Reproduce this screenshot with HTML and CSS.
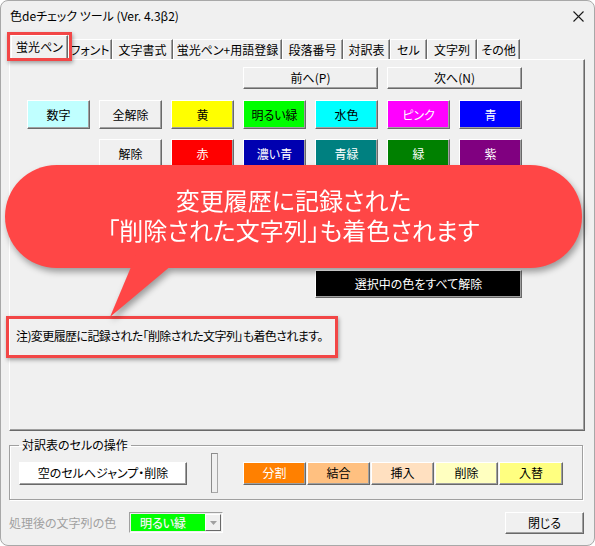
FILE: index.html
```html
<!DOCTYPE html>
<html lang="ja">
<head>
<meta charset="utf-8">
<title>色deチェック ツール</title>
<link rel="stylesheet" href="styles.css">
</head>
<body>
<div class="window">
  <div class="titlebar">
    <span class="title">色deチェック ツール (Ver. 4.3β2)</span>
    <svg class="close-x" width="11" height="11" viewBox="0 0 11 11"><path d="M0.5 0.5 L10.5 10.5 M10.5 0.5 L0.5 10.5" stroke="#1a1a1a" stroke-width="1.1" fill="none"/></svg>
  </div>
  <div class="tabs">
    <div class="tab active">蛍光ペン</div>
    <div class="tab">フォント</div>
    <div class="tab">文字書式</div>
    <div class="tab">蛍光ペン+用語登録</div>
    <div class="tab">段落番号</div>
    <div class="tab">対訳表</div>
    <div class="tab">セル</div>
    <div class="tab">文字列</div>
    <div class="tab">その他</div>
  </div>
  <div class="panel">
    <div class="grid nav">
      <button class="btn prev">前へ(P)</button>
      <button class="btn next">次へ(N)</button>
    </div>
    <div class="grid colors">
      <button class="btn c-num">数字</button>
      <button class="btn">全解除</button>
      <button class="btn c-yellow">黄</button>
      <button class="btn c-lime">明るい緑</button>
      <button class="btn c-aqua">水色</button>
      <button class="btn c-pink">ピンク</button>
      <button class="btn c-blue">青</button>
      <button class="btn col2">解除</button>
      <button class="btn c-red">赤</button>
      <button class="btn c-navy">濃い青</button>
      <button class="btn c-teal">青緑</button>
      <button class="btn c-green">緑</button>
      <button class="btn c-purple">紫</button>
    </div>
    <div class="grid clear-row">
      <button class="btn c-black clear-all">選択中の色をすべて解除</button>
    </div>
    <p class="note">注)変更履歴に記録された「削除された文字列」も着色されます。</p>
  </div>
  <fieldset class="group">
    <legend>対訳表のセルの操作</legend>
    <button class="btn jump">空のセルへジャンプ・削除</button>
    <div class="vbar"></div>
    <div class="ops">
      <button class="btn op o-split">分割</button>
      <button class="btn op o-join">結合</button>
      <button class="btn op o-insert">挿入</button>
      <button class="btn op o-delete">削除</button>
      <button class="btn op o-swap">入替</button>
    </div>
  </fieldset>
  <div class="footer">
    <span class="disabled-label">処理後の文字列の色</span>
    <div class="combo">
      <span class="combo-field">明るい緑</span>
      <span class="combo-arrow"><svg width="7" height="4" viewBox="0 0 7 4"><path d="M0 0 H7 L3.5 4 Z" fill="#a0a0a0"/></svg></span>
    </div>
    <button class="btn close-btn">閉じる</button>
  </div>

  <div class="mark tab-mark"></div>
  <div class="mark note-mark"></div>
  <div class="callout">
    <div class="bubble">
      <p class="bubble-line">変更履歴に記録された</p>
      <p class="bubble-line">「削除された文字列」も着色されます</p>
    </div>
    <svg class="tail" width="90" height="70" viewBox="0 0 90 70"><polygon points="36,4 84,4 10,66" fill="#ff4646"/></svg>
  </div>
</div>
</body>
</html>
```
FILE: styles.css
```css
* { box-sizing: border-box; }
body {
  margin: 0;
  background: #ffffff;
  font-family: "Noto Sans CJK JP", "Noto Sans", sans-serif;
  font-size: 12px;
  font-feature-settings: "palt";
  color: #000;
}
.window {
  position: relative;
  width: 595px;
  height: 546px;
  border: 1px solid #a8a8a8;
  border-radius: 8px;
  background: #f0f0f0;
  overflow: hidden;
}
.titlebar {
  height: 30px;
  display: flex;
  align-items: center;
  justify-content: space-between;
  padding: 0 10px 0 9px;
}
.title { font-size: 12px; line-height: 14px; }
.tabs {
  display: grid;
  grid-template-columns: 57px 44px 61px 109px 61px 47px 37px 50px 43px;
  height: 28px;
  align-items: end;
  padding-left: 10px;
  position: relative;
  z-index: 2;
}
.tab {
  height: 20px;
  line-height: 19px;
  text-align: center;
  border-left: 1px solid #ffffff;
  border-top: 1px solid #ffffff;
  border-right: 1px solid #696969;
  box-shadow: inset -1px 0 #a0a0a0;
  white-space: nowrap;
}
.tab.active {
  height: 25px;
  margin-bottom: -1px;
  line-height: 22px;
  background: #f0f0f0;
}
.panel {
  width: 576px;
  height: 372px;
  margin-left: 8px;
  border: 1px solid;
  border-color: #ffffff #696969 #696969 #ffffff;
  box-shadow: inset -1px -1px #a0a0a0;
  padding: 7px 0 0 6px;
}
.grid {
  display: grid;
  grid-template-columns: repeat(7, 63px);
  column-gap: 9px;
  margin-left: 11px;
}
.nav { grid-template-rows: 22px; }
.prev { grid-column: 4 / 6; }
.next { grid-column: 6 / 8; }
.colors {
  margin-top: 11px;
  grid-template-rows: 29px 29px;
  row-gap: 10px;
}
.col2 { grid-column-start: 2; }
.clear-row { margin-top: 102px; grid-template-rows: 28px; }
.clear-all { grid-column: 5 / 8; }
.btn {
  font-family: inherit;
  font-size: 12px;
  font-feature-settings: "palt";
  color: #000;
  background: #f0f0f0;
  border: 1px solid;
  border-color: #ffffff #696969 #696969 #ffffff;
  box-shadow: inset -1px -1px #a0a0a0;
  padding: 0;
  margin: 0;
  line-height: 14px;
  white-space: nowrap;
}
.c-num { background: #c0ffff; }
.c-yellow { background: #ffff00; }
.c-lime { background: #00ff00; }
.c-aqua { background: #00ffff; }
.c-pink { background: #ff00ff; color: #fff; }
.c-blue { background: #0000ff; color: #fff; }
.c-red { background: #ff0000; color: #fff; }
.c-navy { background: #0000b0; color: #fff; }
.c-teal { background: #008080; color: #fff; }
.c-green { background: #008000; color: #fff; }
.c-purple { background: #800080; color: #fff; }
.c-black { background: #000000; color: #fff; }
.note {
  margin: 31px 0 0 0;
  line-height: 14px;
  letter-spacing: -0.6px;
}
.group {
  margin: 7px 11px 0 8px;
  padding: 1px 0 6px 9px;
  border: 1px solid #a0a0a0;
  box-shadow: 1px 1px 0 #ffffff, inset 1px 1px 0 #ffffff;
  display: flex;
  align-items: center;
  min-inline-size: 0;
}
.group legend {
  padding: 0 3px;
  line-height: 14px;
}
.jump {
  width: 168px;
  height: 23px;
  background: #ffffff;
}
.vbar {
  width: 7px;
  height: 40px;
  margin-left: 24px;
  border: 1px solid #8c8c8c;
  border-right-color: #a8a8a8;
  border-bottom-color: #a8a8a8;
  background: #f0f0f0;
}
.ops {
  display: flex;
  gap: 1px;
  margin-left: 25px;
}
.op { width: 63px; height: 23px; }
.o-swap { width: 64px; }
.o-split { background: #ff8000; color: #fff; }
.o-join { background: #ffc080; }
.o-insert { background: #ffe0c0; }
.o-delete { background: #ffffc0; }
.o-swap { background: #ffff80; }
.footer {
  display: flex;
  align-items: center;
  margin-top: 11px;
  padding: 0 10px 0 8px;
  height: 23px;
}
.disabled-label {
  width: 120px;
  color: #a0a0a0;
  line-height: 14px;
}
.combo {
  width: 94px;
  height: 21px;
  display: flex;
  border: 1px solid;
  border-color: #a0a0a0 #ffffff #ffffff #a0a0a0;
  padding: 1px;
  background: #f0f0f0;
}
.combo-field {
  width: 75px;
  background: #00ff00;
  color: #ffffff;
  padding-left: 9px;
  line-height: 17px;
  text-shadow: 0 0 1px #7fbf7f;
}
.combo-arrow {
  width: 16px;
  display: flex;
  align-items: center;
  justify-content: center;
  border: 1px solid;
  border-color: #ffffff #696969 #696969 #ffffff;
  background: #f0f0f0;
}
.close-btn {
  margin-left: auto;
  width: 79px;
  height: 22px;
}
.mark {
  position: absolute;
  border: 3px solid #f24646;
  box-shadow: 1px 2px 4px rgba(0, 0, 0, 0.35);
  pointer-events: none;
}
.tab-mark { left: 6px; top: 31px; width: 65px; height: 29px; z-index: 3; }
.note-mark { left: 5px; top: 315px; width: 332px; height: 42px; }
.callout {
  position: absolute;
  left: 0;
  top: 0;
  width: 593px;
  height: 330px;
  filter: drop-shadow(2px 4px 3px rgba(0, 0, 0, 0.35));
  pointer-events: none;
  z-index: 4;
}
.bubble {
  position: absolute;
  left: 4px;
  top: 164px;
  width: 577px;
  height: 103px;
  border-radius: 52px;
  background: #ff4646;
  color: #ffffff;
  font-size: 24px;
  display: flex;
  flex-direction: column;
  justify-content: center;
  align-items: center;
  padding-bottom: 3px;
}
.bubble-line {
  margin: 0;
  line-height: 30px;
  height: 30px;
}
.tail {
  position: absolute;
  left: 99px;
  top: 250px;
}
```
